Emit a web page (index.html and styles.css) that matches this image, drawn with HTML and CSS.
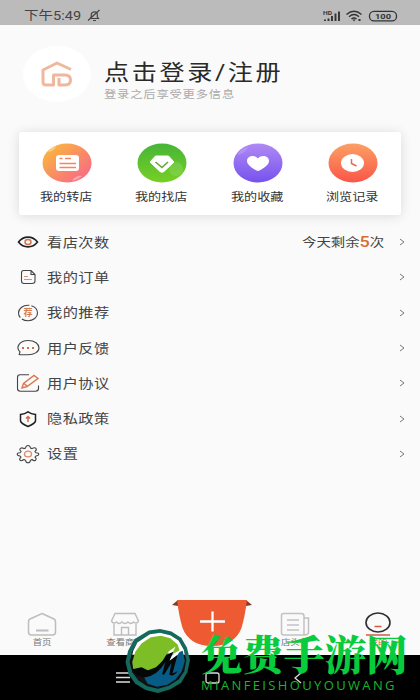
FILE: index.html
```html
<!DOCTYPE html>
<html lang="zh-CN">
<head>
<meta charset="utf-8">
<title>我的</title>
<link rel="stylesheet" href="styles.css">
</head>
<body>
<div class="screen">
  <header class="status">
    <span class="time"><span class="wide">下午5:49</span></span>
    <svg class="mute" width="14" height="13" viewBox="0 0 14 13" fill="none" stroke="#444" stroke-width="1.2"><path d="M3 9.5H11.5L10.3 8V5C10 2.500 5 2 4.300 5V7.500L3 9.500M6 11.500H9M1 11.500L12.500 1"/></svg>
    <svg class="signals" width="76" height="14" viewBox="0 0 76 14" fill="none" stroke="#333">
      <text class="hd" x="0" y="5.500" textLength="9" lengthAdjust="spacingAndGlyphs">HD</text>
      <path stroke-width="1.900" d="M2 12V10.500M5.500 12V9.500M9 12V7M12.500 12V4.500M16 12V2.500"/>
      <path stroke-width="1.400" d="M23.500 5.500Q31-1 38.500 5.500M26 7.700Q31 3.500 36 7.700M28.500 10Q31 7.800 33.500 10"/>
      <path fill="#333" stroke="none" d="M29.500 10.500h3L31 12.500zM35.500 10h2v2h-2z"/>
      <rect x="46.500" y="2.300" width="27" height="9.600" rx="4.500" stroke-width="1.300"/>
      <text class="pct" x="52" y="10" textLength="16" lengthAdjust="spacingAndGlyphs">100</text>
    </svg>
  </header>

  <main class="page">
    <section class="profile">
      <div class="avatar">
        <svg width="32" height="26" viewBox="0 0 32 26" fill="none" stroke="#efb89d" stroke-width="3" stroke-linejoin="round"><path d="M30 8.500L16 2L2 9V21Q2 24 5.500 24H12.500V14H24Q29.500 14 29.500 19T24 24H18V17"/></svg>
      </div>
      <div class="who">
        <h1><span class="wide">点击登录/注册</span></h1>
        <p><span class="wide">登录之后享受更多信息</span></p>
      </div>
    </section>

    <section class="card">
      <div class="tile">
        <svg width="50" height="40" viewBox="0 0 50 40">
          <defs><linearGradient id="g1" x1="0" y1="0" x2="1" y2="1"><stop offset=".1" stop-color="#fbb63c"/><stop offset=".55" stop-color="#f98a68"/><stop offset="1" stop-color="#f9608c"/></linearGradient></defs>
          <ellipse cx="25" cy="20" rx="24.500" ry="19.500" fill="url(#g1)"/>
          <path d="M6 9Q9 4 14 3Q13 8 6 9M30 37.500Q34 32 40 33Q36 37 30 37.500" fill="#fff" opacity=".35"/>
          <rect x="14" y="12" width="23" height="16" rx="3" fill="#fff"/>
          <path d="M17.500 15.500h3M23 15.500h6M17.500 20.500H34M17.500 24.500H34" stroke="#f9835f" stroke-width="1.400"/>
        </svg>
        <span class="label"><span class="wide">我的转店</span></span>
      </div>
      <div class="tile">
        <svg width="50" height="40" viewBox="0 0 50 40">
          <defs><linearGradient id="g2" x1="0" y1="0" x2="0" y2="1"><stop stop-color="#47b538"/><stop offset="1" stop-color="#77cf23"/></linearGradient></defs>
          <ellipse cx="25" cy="20" rx="24.500" ry="19.500" fill="url(#g2)"/>
          <ellipse cx="39" cy="26" rx="7" ry="7" fill="#fff" opacity=".12"/>
          <path d="M18.500 13H31.500L37 19L27 28.500Q25 30 23 28.500L13 19Z" fill="#fff" stroke="#fff" stroke-linejoin="round"/>
          <path d="M18.500 19L25 24.500L31 19" fill="none" stroke="#62a737" stroke-width="1.600"/>
        </svg>
        <span class="label"><span class="wide">我的找店</span></span>
      </div>
      <div class="tile">
        <svg width="50" height="40" viewBox="0 0 50 40">
          <defs><linearGradient id="g3" x1="0" y1="0" x2="0" y2="1"><stop stop-color="#b08af4"/><stop offset="1" stop-color="#7652ef"/></linearGradient></defs>
          <ellipse cx="25" cy="20" rx="24.500" ry="19.500" fill="url(#g3)"/>
          <path d="M4 12Q8 5 15 4Q12 11 4 12" fill="#fff" opacity=".15"/>
          <path d="M25 15.500C22 11.500 14 12.500 14 18C14 22 20 25.500 23.500 27.500Q25 28.300 26.500 27.500C30 25.500 36 22 36 18C36 12.500 28 11.500 25 15.500Z" fill="#fff"/>
        </svg>
        <span class="label"><span class="wide">我的收藏</span></span>
      </div>
      <div class="tile">
        <svg width="50" height="40" viewBox="0 0 50 40">
          <defs><linearGradient id="g4" x1="0" y1="0" x2="0" y2="1"><stop stop-color="#fca065"/><stop offset="1" stop-color="#fa5548"/></linearGradient></defs>
          <ellipse cx="25" cy="20" rx="24.500" ry="19.500" fill="url(#g4)"/>
          <ellipse cx="24.500" cy="20" rx="11.500" ry="9" fill="#fff"/>
          <path d="M23.500 16V20.500L28.500 23" fill="none" stroke="#ea6b55" stroke-width="1.500"/>
        </svg>
        <span class="label"><span class="wide">浏览记录</span></span>
      </div>
    </section>

    <ul class="menu">
      <li>
        <svg class="ico" viewBox="0 0 24 20"><path d="M2.500 10C7.500 3.500 16.500 3.500 21.500 10C16.500 16.500 7.500 16.500 2.500 10Z" stroke="#222" stroke-width="1.600"/><ellipse cx="12" cy="10" rx="3" ry="2.500" stroke="#d4744f" stroke-width="1.500"/></svg>
        <span class="name"><span class="wide">看店次数</span></span>
        <span class="remain"><span class="wide">今天剩余<b>5</b>次</span></span>
        <svg class="chev" viewBox="0 0 6 8"><path d="M1 1L5 4L1 7"/></svg>
      </li>
      <li>
        <svg class="ico" viewBox="0 0 24 20"><path d="M7.500 3.500H15L19 7.500V14Q19 16.500 16 16.500H8Q5.500 16.500 5.500 14V6Q5.500 3.500 7.500 3.500M15 4V7.500H19"/><path d="M8 9.500h4M8 12.500h8" stroke="#d99176"/></svg>
        <span class="name"><span class="wide">我的订单</span></span>
        <svg class="chev" viewBox="0 0 6 8"><path d="M1 1L5 4L1 7"/></svg>
      </li>
      <li>
        <svg class="ico" viewBox="0 0 24 20"><ellipse cx="12" cy="10" rx="9.500" ry="7.800" stroke-dasharray="20 2"/><text class="rec" x="7.500" y="13.300">荐</text></svg>
        <span class="name"><span class="wide">我的推荐</span></span>
        <svg class="chev" viewBox="0 0 6 8"><path d="M1 1L5 4L1 7"/></svg>
      </li>
      <li>
        <svg class="ico" viewBox="0 0 24 20"><path d="M3 17L4 13.800C-1 9 4 2.500 12 2.500C19 2.500 23 6 23 10S18 16.800 12 16.800H3"/><path d="M6 10h2M11 10h2M16 10h2" stroke="#cf6c4c" stroke-width="1.800"/></svg>
        <span class="name"><span class="wide">用户反馈</span></span>
        <svg class="chev" viewBox="0 0 6 8"><path d="M1 1L5 4L1 7"/></svg>
      </li>
      <li>
        <svg class="ico" viewBox="0 0 24 20"><path d="M13 1.800H4Q1.500 1.800 1.500 4.500V15.500Q1.500 18.200 4.500 18.200H19.500Q22.500 18.200 22.500 15.500V12.500"/><path d="M6 15L7.500 10.500L18 2.500L22 5.500L11 13.500ZM8 10.500L11 13" stroke="#db774e" stroke-width="1.400"/></svg>
        <span class="name"><span class="wide">用户协议</span></span>
        <svg class="chev" viewBox="0 0 6 8"><path d="M1 1L5 4L1 7"/></svg>
      </li>
      <li>
        <svg class="ico" viewBox="0 0 24 20"><path d="M12 2.800Q15 5 19.500 5.500V12Q19 14.500 12 17.500Q5 14.500 4.500 12V5.500Q9 5 12 2.800Z" stroke="#222" stroke-width="1.500"/><path d="M12 13V8M10 9.500L12 7.500L14 9.500" stroke="#d4694a" stroke-width="1.500"/></svg>
        <span class="name"><span class="wide">隐私政策</span></span>
        <svg class="chev" viewBox="0 0 6 8"><path d="M1 1L5 4L1 7"/></svg>
      </li>
      <li>
        <svg class="ico" viewBox="0 0 24 20"><path d="M9.500 4Q10 1.500 12 1.500T14.500 4L16 4.600Q19 3 20 4.500T19 7.500L20 8.800Q22.800 9 22.800 10.200T20 12L19 13.200Q21 15 19.500 16.200T16 15.500L14.500 16.300Q14 18.700 12 18.700T9.500 16.300L8 15.500Q5 17.500 4 16.200T5 13.200L4 12Q1.200 11.500 1.200 10.200T4 8.800L5 7.500Q3 5.500 4.500 4.400T8 4.600Z"/><ellipse cx="12" cy="10" rx="3.500" ry="2.900" stroke="#df8c6b" stroke-width="1.400"/></svg>
        <span class="name"><span class="wide">设置</span></span>
        <svg class="chev" viewBox="0 0 6 8"><path d="M1 1L5 4L1 7"/></svg>
      </li>
    </ul>
  </main>

  <nav class="tabs">
    <div class="tab">
      <svg width="30" height="25" viewBox="0 0 30 25" fill="none" stroke="#bdbdbd" stroke-width="1.500"><path d="M15 1.500L27 7Q28.500 7.800 28.500 9.500V20Q28.500 23 25.500 23H4.500Q1.500 23 1.500 20V9.500Q1.500 7.800 3 7Z"/><path d="M9 18.500H21.500" stroke-width="2"/></svg>
      <span class="tablabel"><span class="wide">首页</span></span>
    </div>
    <div class="tab">
      <svg width="30" height="25" viewBox="0 0 30 25" fill="none" stroke="#bdbdbd" stroke-width="1.400"><path d="M5 1.500H25L28.500 9Q27 12.500 23.500 10Q21 13 18 10Q15 13 12 10Q9 13 6.500 10Q3 12.500 1.500 9ZM4 12V23H26V12M11.500 23V15.500H18.500V23"/></svg>
      <span class="tablabel"><span class="wide">查看商铺</span></span>
    </div>
    <div class="tab add">
      <svg width="80" height="52" viewBox="0 0 80 52"><path d="M0 5L6 0V6ZM80 5L74 0V6Z" fill="#843b25"/><path d="M5 0H75Q73 16 69.500 28C65 39 56 46 40 46S15 39 10.500 28Q7 16 5 0Z" fill="#ee5b32"/><path d="M28 21.500H53M40.500 11.500V31.500" stroke="#fff" stroke-width="2.300"/></svg>
    </div>
    <div class="tab">
      <svg width="30" height="25" viewBox="0 0 30 25" fill="none" stroke="#c2c2c2" stroke-width="1.500"><path d="M24 23H4Q1.500 23 1.500 21V3Q1.500 1.500 4 1.500H21Q24 1.500 24 4V23Q28.500 23 28.500 20V6H24M7 8H19M7 13H19M7 18H19"/></svg>
      <span class="tablabel"><span class="wide">店头条</span></span>
    </div>
    <div class="tab on">
      <svg width="30" height="25" viewBox="0 0 30 25" fill="none"><ellipse cx="15" cy="10.500" rx="12" ry="9.500" stroke="#2e2e34" stroke-width="1.600"/><path d="M11.500 14.500H18.500M3 23H27" stroke="#d75843" stroke-width="1.500"/></svg>
      <span class="tablabel"><span class="wide">我的</span></span>
    </div>
  </nav>

  <footer class="keys">
    <svg width="14" height="11" viewBox="0 0 14 11"><path d="M0 1H14M0 5.500H14M0 10H14"/></svg>
    <svg width="15" height="12" viewBox="0 0 15 12"><rect x="1" y="1" width="13" height="10" rx="2"/></svg>
    <svg width="8" height="12" viewBox="0 0 8 12"><path d="M7 1L1 6L7 11"/></svg>
  </footer>

  <div class="brand">
    <svg width="66" height="66" viewBox="1 1 64 64" preserveAspectRatio="none">
      <path d="M24 3.500L35 2L46 4.500L55.500 10.500L61 20L64 32L61.500 44L55.500 54L45 60.500L33 64L21 61L11 55L4.500 46L1.500 34L4 23L10 12Z" fill="#14695f"/>
      <path d="M25 7L35 5.500L45 8L53 13L58 22L60.500 32L58.500 43L53 51L43.500 57L33 60L22.500 57.500L14 52L8 44L5.500 34L8 24L13 15Z" fill="#111"/>
      <path d="M25 7L35 5.500L45 8L53 13L58 22L59 27H8L9 23L13 15Z" fill="#fff"/>
      <path d="M26 10L36 8.500L45 11L52 17L54 23L43 28L31 39L18 44L9 41L8 34L11 24L17 16Z" fill="#7dbd25"/>
      <path d="M19 48Q34 45 44 28L57 23L59 33L56 43L50 51L42 56L32 58L23 55Z" fill="#075c87"/>
      <path d="M43 24L50 19L46 28L56 21L48 33L44 32Z" fill="#fff"/>
      <path d="M8 41L17 39L25 43Q35 39 41 27L48 24L44 33L52 27L47 45L52 43Q48 49 44 46L46 35L39 46L37 46L40 34Q33 47 20 49L12 47Z" fill="#050707"/>
    </svg>
    <div class="brandtext">
      <span class="brandname">免费手游网</span>
      <span class="brandurl">MIANFEISHOUYOUWANG</span>
    </div>
  </div>
</div>
</body>
</html>
```
FILE: styles.css
```css
* { box-sizing: border-box; }
body {
  margin: 0;
  font-family: Roboto, "Noto Sans CJK SC", sans-serif;
  color: #444;
  background: #fafafa;
}
h1, p, ul { margin: 0; padding: 0; font-weight: 400; }
svg { display: block; flex: none; }
.screen {
  position: relative;
  display: flex;
  flex-direction: column;
  width: 420px;
  height: 700px;
  overflow: hidden;
}
.wide {
  display: inline-block;
  white-space: nowrap;
  transform: scaleX(1.17);
  transform-origin: left center;
}

.status {
  display: flex;
  align-items: center;
  height: 25px;
  padding: 6px 21px 0 24px;
  background: #bbb;
}
.time { width: 63px; font-size: 12px; line-height: 18px; color: #444; }
.time .wide { transform: scaleX(1.21); }
.signals { margin-left: auto; }
.hd { font: 700 5px Roboto, sans-serif; fill: #333; stroke: none; }
.pct { font: 700 7.5px Roboto, sans-serif; fill: #333; stroke: none; }

.page { flex: 1; min-height: 0; }
.profile { display: flex; height: 107px; padding: 21px 0 0 23px; }
.avatar {
  display: flex;
  align-items: center;
  justify-content: center;
  width: 68px;
  height: 56px;
  border-radius: 50%;
  background: #fff;
}
.who { padding: 11px 0 0 13px; }
.who h1 { font-size: 21.5px; line-height: 31px; color: #292929; letter-spacing: 2.2px; }
.who p { font-size: 10.5px; line-height: 13px; color: #aaa; letter-spacing: .7px; }

.card {
  display: flex;
  height: 83px;
  margin: 0 19px;
  padding-top: 11px;
  border-radius: 3px;
  background: #fff;
  box-shadow: 0 1px 12px rgba(0, 0, 0, .13);
}
.tile { flex: 1; display: flex; flex-direction: column; align-items: center; }
.label { width: 54px; margin-top: 7px; font-size: 11.2px; line-height: 16px; color: #333; }

.menu { list-style: none; padding: 9.5px 15px 0 16px; }
.menu li { display: flex; align-items: center; height: 35.3px; }
.ico { width: 24px; height: 20px; fill: none; stroke: #444; stroke-width: 1.1; }
.rec { font-size: 9px; font-weight: 700; fill: #d57c50; stroke: none; }
.name { flex: 1; padding: 1px 0 0 6.5px; font-size: 13px; line-height: 20px; letter-spacing: .4px; }
.remain { width: 97px; font-size: 12px; line-height: 20px; color: #444; }
.remain .wide { transform: scaleX(1.2); }
.remain b { font-size: 15px; font-weight: 500; color: #d46d36; }
.chev { width: 6px; height: 8px; fill: none; stroke: #777; stroke-width: 1; }

.tabs { display: flex; height: 55px; }
.tab { flex: 1; display: flex; flex-direction: column; align-items: center; padding-top: 12px; }
.tab.add { padding: 0 0 0 4px; }
.tablabel { font-size: 8px; line-height: 11px; color: #777; }
.tablabel .wide { transform-origin: center; }
.on .tablabel { color: #d75843; }

.keys {
  display: flex;
  align-items: center;
  justify-content: space-between;
  height: 45px;
  padding: 0 118px 0 116px;
  background: #000;
}
.keys svg { fill: none; stroke: #ddd; stroke-width: 1.3; }

.brand { position: absolute; left: 125px; top: 628px; display: flex; }
.brandtext { display: flex; flex-direction: column; padding-left: 10px; white-space: nowrap; }
.brandname {
  font: 900 41.3px/48px "Noto Serif CJK SC", "Noto Sans CJK SC", serif;
  color: #08cc3d;
}
.brandurl {
  margin-top: 3px;
  font: 13px/13px "Open Sans", sans-serif;
  letter-spacing: 2.35px;
  color: #18b52d;
}
```
